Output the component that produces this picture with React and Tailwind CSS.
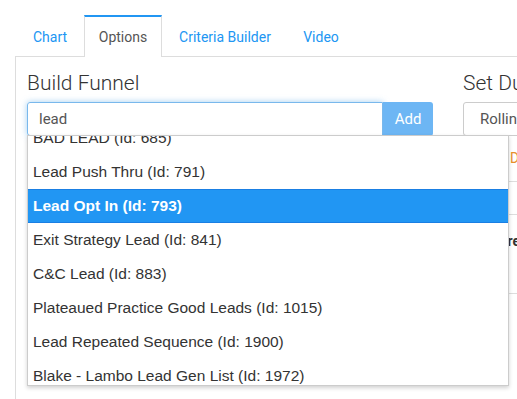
import React from "react";

const items = [
  "BAD LEAD (Id: 685)",
  "Lead Push Thru (Id: 791)",
  "Lead Opt In (Id: 793)",
  "Exit Strategy Lead (Id: 841)",
  "C&C Lead (Id: 883)",
  "Plateaued Practice Good Leads (Id: 1015)",
  "Lead Repeated Sequence (Id: 1900)",
  "Blake - Lambo Lead Gen List (Id: 1972)",
];

export default function App() {
  return (
    <div className="w-[517px] h-[399px] bg-white overflow-hidden relative font-['Roboto',sans-serif]">
      <div className="pl-[15px]">
        {/* Tabs */}
        <div className="flex pt-[15px] border-b border-[#dddddd] h-[57px] pl-[1px]">
          <div className="w-[68px] h-[41px] pt-[3px] flex items-center justify-center text-[14px] text-[#2196f3]">Chart</div>
          <div className="w-[78px] h-[42px] -mb-[1px] pt-[1px] flex items-center justify-center text-[14px] text-[#555555] bg-white border-t-2 border-t-[#2196f3] border-x border-x-[#dddddd]">Options</div>
          <div className="w-[126px] h-[41px] pt-[3px] flex items-center justify-center text-[14px] text-[#2196f3]">Criteria Builder</div>
          <div className="w-[66px] h-[41px] pt-[3px] flex items-center justify-center text-[14px] text-[#2196f3]">Video</div>
        </div>
        {/* Panel */}
        <div className="border-l border-[#dddddd] h-[400px] pl-[11px] pt-[11px] flex gap-[30px]">
          {/* Left column */}
          <div className="w-[406px] shrink-0 relative">
            <div className="text-[21px] leading-[30px] text-[#333333] font-light">Build Funnel</div>
            <div className="flex mt-[4px] h-[34px]">
              <div className="w-[356px] border border-[#79b8ec] rounded-l-[3px] shadow-[0_0_6px_rgba(102,175,233,0.6)] flex items-center pl-[11px] text-[15px] text-[#555555]">lead</div>
              <div className="w-[50px] bg-[#6db6f4] rounded-r-[3px] flex items-center justify-center text-white text-[15px]">Add</div>
            </div>
            {/* Dropdown */}
            <div className="absolute left-0 top-[67px] w-[482px] h-[251px] bg-white border border-[#cccccc] shadow-[0_2px_4px_rgba(0,0,0,0.18)] overflow-hidden z-10 font-['Liberation_Sans',Arial,sans-serif]">
              <div className="-mt-[15px]">
                {items.map((t, i) =>
                  i === 2 ? (
                    <div key={i} className="h-[34px] bg-[#2196f3] border-y border-[#1a7fe3] flex items-center pl-[5px] text-white font-bold text-[15.5px]">{t}</div>
                  ) : (
                    <div key={i} className="h-[34px] flex items-center pl-[5px] text-[#333333] text-[15.5px]">{t}</div>
                  )
                )}
              </div>
            </div>
          </div>
          {/* Right column */}
          <div className="w-[200px] shrink-0">
            <div className="text-[21px] leading-[30px] text-[#333333] font-light whitespace-nowrap">Set Duration</div>
            <div className="mt-[4px] h-[34px] border border-[#cccccc] rounded-[3px] flex items-center pl-[16px] text-[15px] text-[#555555]">Rolling Window</div>
            <div className="h-[46px] flex items-center pl-[12px] text-[14px] whitespace-nowrap border-b border-[#dddddd]">
              <span className="font-bold text-[#333333]">Start</span>
              <span className="ml-[4px] text-[#e8902c]">Date</span>
            </div>
            <div className="h-[33px] border-b border-[#dddddd]"></div>
            <div className="h-[79px] pt-[16px] text-[14px] font-bold text-[#333333] whitespace-nowrap border-b border-[#dddddd]">Compare</div>
          </div>
        </div>
      </div>
    </div>
  );
}
